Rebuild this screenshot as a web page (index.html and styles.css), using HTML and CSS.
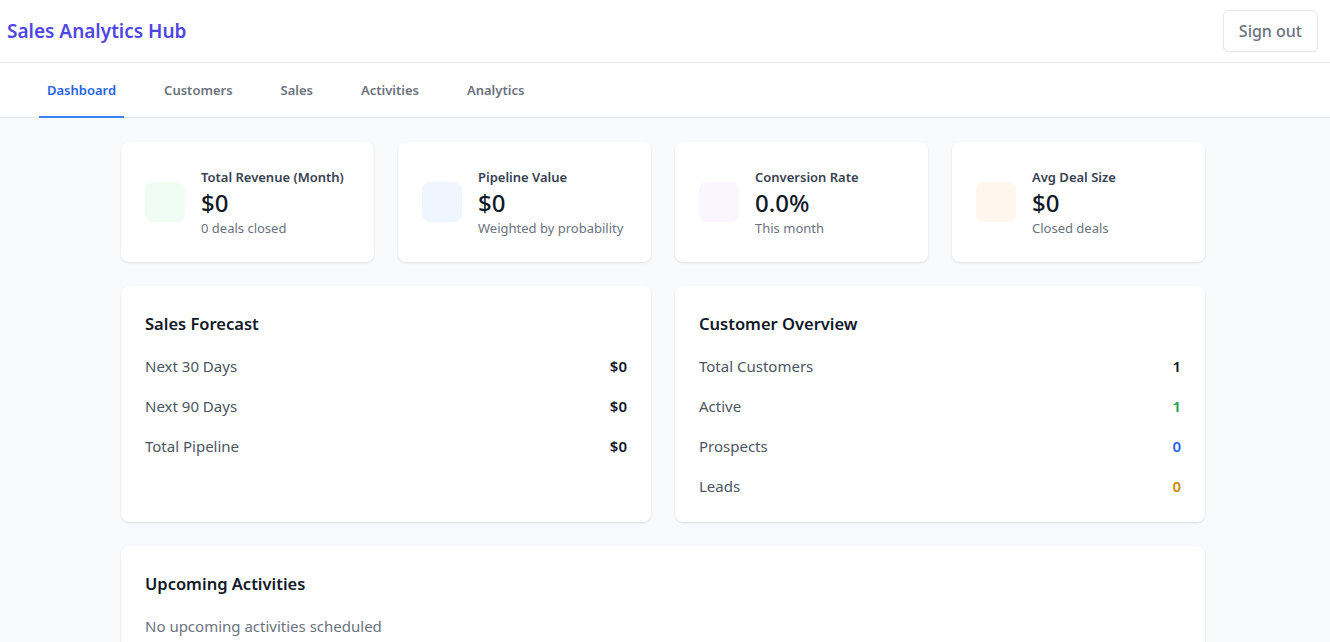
FILE: index.html
```html
<!DOCTYPE html>
<html lang="en">
<head>
<meta charset="utf-8">
<title>Sales Analytics Hub</title>
<link rel="stylesheet" href="styles.css">
</head>
<body>
<header class="topbar">
  <h1 class="brand">Sales Analytics Hub</h1>
  <button class="signout">Sign out</button>
</header>
<nav class="tabs">
  <a class="tab active">Dashboard</a>
  <a class="tab">Customers</a>
  <a class="tab">Sales</a>
  <a class="tab">Activities</a>
  <a class="tab">Analytics</a>
</nav>
<main class="content">
  <section class="stats">
    <div class="card stat">
      <div class="stat-icon green"></div>
      <div class="stat-body">
        <div class="stat-label">Total Revenue (Month)</div>
        <div class="stat-value">$0</div>
        <div class="stat-sub">0 deals closed</div>
      </div>
    </div>
    <div class="card stat">
      <div class="stat-icon blue"></div>
      <div class="stat-body">
        <div class="stat-label">Pipeline Value</div>
        <div class="stat-value">$0</div>
        <div class="stat-sub">Weighted by probability</div>
      </div>
    </div>
    <div class="card stat">
      <div class="stat-icon purple"></div>
      <div class="stat-body">
        <div class="stat-label">Conversion Rate</div>
        <div class="stat-value">0.0%</div>
        <div class="stat-sub">This month</div>
      </div>
    </div>
    <div class="card stat">
      <div class="stat-icon orange"></div>
      <div class="stat-body">
        <div class="stat-label">Avg Deal Size</div>
        <div class="stat-value">$0</div>
        <div class="stat-sub">Closed deals</div>
      </div>
    </div>
  </section>
  <section class="panels">
    <div class="card panel">
      <h2 class="panel-title">Sales Forecast</h2>
      <div class="row"><span class="row-label">Next 30 Days</span><span class="row-value">$0</span></div>
      <div class="row"><span class="row-label">Next 90 Days</span><span class="row-value">$0</span></div>
      <div class="row"><span class="row-label">Total Pipeline</span><span class="row-value">$0</span></div>
    </div>
    <div class="card panel">
      <h2 class="panel-title">Customer Overview</h2>
      <div class="row"><span class="row-label">Total Customers</span><span class="row-value">1</span></div>
      <div class="row"><span class="row-label">Active</span><span class="row-value v-green">1</span></div>
      <div class="row"><span class="row-label">Prospects</span><span class="row-value v-blue">0</span></div>
      <div class="row"><span class="row-label">Leads</span><span class="row-value v-amber">0</span></div>
    </div>
  </section>
  <section class="card panel wide">
    <h2 class="panel-title">Upcoming Activities</h2>
    <p class="empty">No upcoming activities scheduled</p>
  </section>
</main>
</body>
</html>
```
FILE: styles.css
```css
* { box-sizing: border-box; }
html, body { margin: 0; padding: 0; }
body {
  font-family: "Noto Sans", "Open Sans", sans-serif;
  background: #f9fafb;
  color: #111827;
  overflow: hidden;
}
.topbar {
  height: 63px;
  background: #fff;
  border-bottom: 1px solid #e5e7eb;
  box-shadow: 0 1px 2px rgba(0,0,0,0.04);
  display: flex;
  align-items: center;
  justify-content: space-between;
  padding: 0 12px 0 7px;
}
.brand {
  margin: 0;
  font-size: 19px;
  font-weight: 600;
  color: #4f46e5;
}
.signout {
  font-family: inherit;
  font-size: 16px;
  font-weight: 500;
  color: #6b7280;
  background: #fff;
  border: 1px solid #e5e7eb;
  border-radius: 6px;
  height: 42px;
  padding: 0 15px;
  box-shadow: 0 1px 2px rgba(0,0,0,0.04);
}
.tabs {
  height: 55px;
  background: #fff;
  border-bottom: 1px solid #e5e7eb;
  display: flex;
  gap: 32px;
  padding-left: 39px;
}
.tab {
  display: flex;
  align-items: center;
  padding: 0 8px;
  font-size: 13px;
  font-weight: 600;
  color: #6b7280;
  border-bottom: 2px solid transparent;
  margin-bottom: -1px;
}
.tab.active {
  color: #2563eb;
  border-bottom-color: #3b82f6;
}
.content {
  width: 1084px;
  margin: 0 0 0 121px;
  padding-top: 24px;
  display: flex;
  flex-direction: column;
  gap: 24px;
}
.card {
  background: #fff;
  border-radius: 8px;
  box-shadow: 0 1px 3px rgba(0,0,0,0.08), 0 1px 2px rgba(0,0,0,0.04);
}
.stats {
  display: grid;
  grid-template-columns: repeat(4, 1fr);
  gap: 24px;
}
.stat {
  height: 120px;
  display: flex;
  align-items: center;
  padding: 0 24px;
  gap: 16px;
}
.stat-icon {
  width: 40px;
  height: 40px;
  border-radius: 8px;
  flex: none;
}
.green { background: #f0fdf4; }
.blue { background: #eff6ff; }
.purple { background: #faf5ff; }
.orange { background: #fff7ed; }
.stat-label {
  font-size: 13px;
  font-weight: 600;
  color: #374151;
  line-height: 20px;
}
.stat-value {
  font-size: 24px;
  font-weight: 500;
  color: #111827;
  line-height: 32px;
}
.stat-sub {
  font-size: 13px;
  color: #6b7280;
  line-height: 18px;
  white-space: nowrap;
}
.panels {
  display: grid;
  grid-template-columns: 1fr 1fr;
  gap: 24px;
}
.panel {
  padding: 23px 24px 16px;
  min-height: 235px;
}
.panel-title {
  margin: 3px 0 10px;
  font-size: 16.5px;
  font-weight: 600;
  color: #111827;
  line-height: 24px;
}
.row {
  display: flex;
  justify-content: space-between;
  align-items: center;
  height: 40px;
}
.row-label {
  font-size: 15px;
  color: #4b5563;
}
.row-value {
  font-size: 15px;
  font-weight: 600;
  color: #111827;
}
.v-green { color: #16a34a; }
.v-blue { color: #2563eb; }
.v-amber { color: #ca8a04; }
.wide { min-height: 120px; }
.empty {
  margin: 0;
  font-size: 15px;
  color: #6b7280;
  line-height: 40px;
}
```
